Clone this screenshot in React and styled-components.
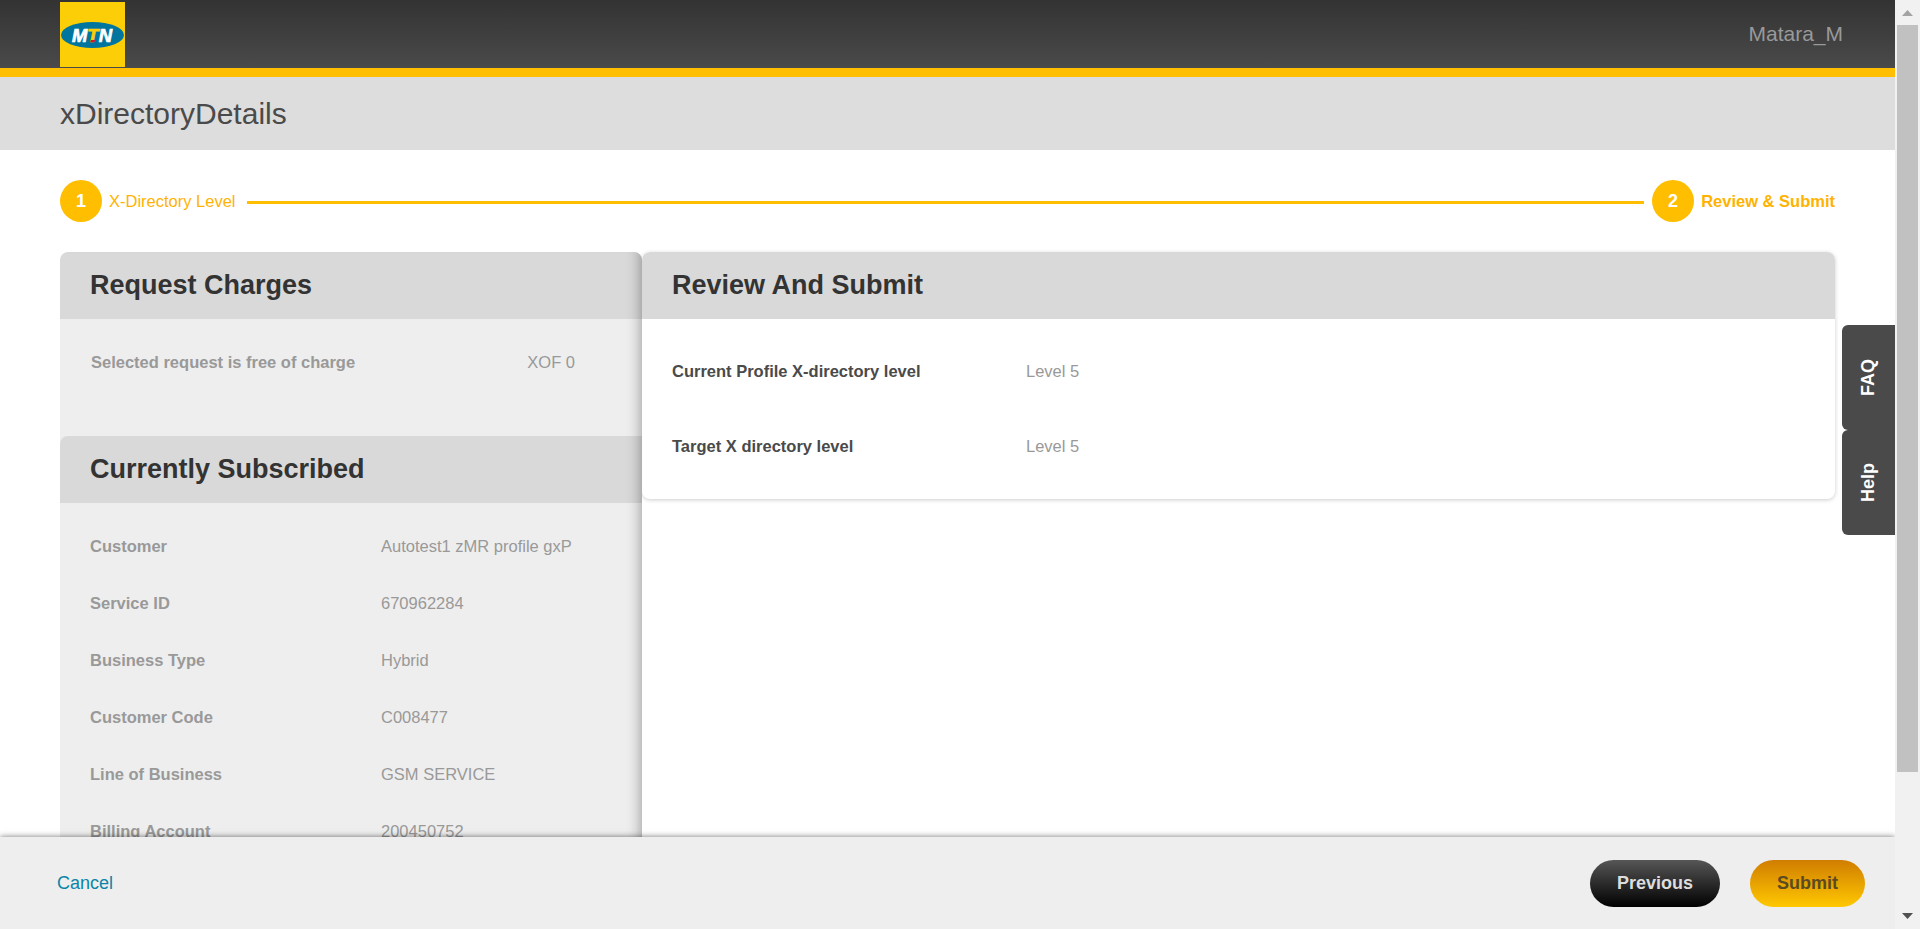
import React from 'react';
import styled, { createGlobalStyle } from 'styled-components';

const GlobalStyle = createGlobalStyle`
  * { box-sizing: border-box; }
  html, body { margin: 0; padding: 0; height: 929px; overflow: hidden; background: #fff; }
  body { font-family: "Liberation Sans", Arial, sans-serif; font-size: 16.5px; color: #999; }
  h1, h2, dl, dt, dd { margin: 0; }
`;

const Window = styled.div`
  display: flex;
  width: 1920px;
  height: 929px;
`;

const Page = styled.div`
  position: relative;
  display: flex;
  flex-direction: column;
  width: 1895px;
  height: 929px;
  background: #fff;
`;

const TopBar = styled.header`
  display: flex;
  align-items: center;
  justify-content: space-between;
  flex: none;
  height: 77px;
  padding: 0 52px 0 60px;
  border-bottom: 9px solid #ffbe00;
  background: linear-gradient(#333, #4a4a4a) padding-box;
`;

const Logo = styled.svg`
  display: block;
  width: 65px;
  height: 65px;
  margin-top: 1px;
`;

const UserName = styled.span`
  font-size: 21px;
  line-height: 24px;
  color: #999;
`;

const TitleBar = styled.div`
  display: flex;
  align-items: center;
  flex: none;
  height: 73px;
  padding-left: 60px;
  background: #ddd;
`;

const Title = styled.h1`
  font-size: 30px;
  font-weight: 400;
  line-height: 34px;
  color: #4a4a4a;
`;

const Steps = styled.div`
  display: flex;
  align-items: center;
  flex: none;
  height: 42px;
  margin: 30px 60px;
`;

const StepNumber = styled.span`
  display: flex;
  align-items: center;
  justify-content: center;
  width: 42px;
  height: 42px;
  border-radius: 50%;
  background: #ffbe00;
  color: #fff;
  font-size: 18px;
  font-weight: 700;
`;

const StepLabel = styled.span`
  margin-left: 7px;
  color: #ffb300;
  font-weight: ${(p) => (p.$current ? 700 : 400)};
  white-space: nowrap;
`;

const StepLine = styled.span`
  flex: 1;
  height: 3px;
  margin: 3px 8px 0 11px;
  background: #ffbe00;
`;

const Columns = styled.main`
  display: flex;
  align-items: flex-start;
  flex: 1;
  min-height: 0;
  margin: 0 60px;
`;

const Sidebar = styled.aside`
  position: relative;
  width: 582px;
  height: 100%;
  overflow: hidden;
  border-radius: 8px 8px 0 0;
  background: #eee;

  &::after {
    content: '';
    position: absolute;
    inset: 0;
    box-shadow: inset -15px 0 15px -15px rgba(0, 0, 0, 0.4);
  }
`;

const PanelHead = styled.h2`
  display: flex;
  align-items: center;
  height: 67px;
  padding-left: 30px;
  border-radius: 8px 0 0 0;
  background: #d9d9d9;
  color: #333;
  font-size: 27px;
  font-weight: 700;
`;

const ChargeRow = styled.div`
  display: flex;
  justify-content: space-between;
  height: 117px;
  padding: 34px 67px 0 31px;
  line-height: 19px;
`;

const Strong = styled.strong`
  font-weight: 700;
`;

const Details = styled.dl`
  display: grid;
  grid-template-columns: 291px 1fr;
  grid-auto-rows: 57px;
  padding: 15px 0 0 30px;
  line-height: 57px;
`;

const Term = styled.dt`
  font-weight: 700;
`;

const Value = styled.dd`
  white-space: nowrap;
`;

const ReviewCard = styled.section`
  flex: 1;
  overflow: hidden;
  height: 247px;
  border-radius: 8px;
  background: #fff;
  box-shadow: 0 1px 4px rgba(0, 0, 0, 0.2);
`;

const ReviewList = styled.dl`
  display: grid;
  grid-template-columns: 354px 1fr;
  grid-auto-rows: 75px;
  padding: 15px 0 0 30px;
  line-height: 75px;
`;

const ReviewTerm = styled(Term)`
  color: #4a4a4a;
`;

const Footer = styled.footer`
  position: relative;
  display: flex;
  align-items: center;
  flex: none;
  gap: 30px;
  height: 92px;
  padding: 1px 30px 0 57px;
  background: #eee;
  box-shadow: 0 0 6px rgba(0, 0, 0, 0.55);
  clip-path: inset(-10px 0 0 0);
`;

const Cancel = styled.a`
  margin-right: auto;
  color: #0a85a8;
  font-size: 18px;
`;

const Button = styled.button`
  width: ${(p) => p.$width}px;
  height: 47px;
  padding: 0;
  border: 0;
  border-radius: 23.5px;
  background: ${(p) => (p.$primary ? 'linear-gradient(#d07d00, #ffc800)' : 'linear-gradient(#565656, #000)')};
  color: ${(p) => (p.$primary ? '#5c4a22' : '#ddd')};
  font: 700 18px "Liberation Sans", Arial, sans-serif;
`;

const SideTabs = styled.nav`
  position: absolute;
  top: 325px;
  right: 0;
  display: flex;
  flex-direction: column;
`;

const SideTab = styled.div`
  display: flex;
  align-items: center;
  justify-content: center;
  width: 53px;
  height: 105px;
  border-radius: 6px 0 0 6px;
  background: #4a4a4a;
  color: #fff;
`;

const SideTabText = styled.span`
  transform: rotate(-90deg);
  font-size: 18px;
  font-weight: 700;
`;

const Scrollbar = styled.div`
  display: flex;
  flex-direction: column;
  align-items: center;
  width: 25px;
  height: 929px;
  background: #f1f1f1;
`;

const ArrowBox = styled.svg`
  display: block;
  flex: none;
  width: 25px;
  height: 25px;
`;

const Track = styled.div`
  flex: 1;
  width: 21px;
`;

const Thumb = styled.div`
  height: 747px;
  background: #c1c1c1;
`;

const subscription = [
  ['Customer', 'Autotest1 zMR profile gxP'],
  ['Service ID', '670962284'],
  ['Business Type', 'Hybrid'],
  ['Customer Code', 'C008477'],
  ['Line of Business', 'GSM SERVICE'],
  ['Billing Account', '200450752'],
];

const review = [
  ['Current Profile X-directory level', 'Level 5'],
  ['Target X directory level', 'Level 5'],
];

function MtnLogo() {
  return (
    <Logo viewBox="0 0 65 65">
      <rect width="65" height="65" fill="#fbce07" />
      <ellipse cx="32.5" cy="33" rx="31.5" ry="13" fill="#00759e" />
      <text
        x="32"
        y="39.5"
        textAnchor="middle"
        textLength="40"
        lengthAdjust="spacingAndGlyphs"
        fontFamily="Liberation Sans"
        fontSize="18"
        fontWeight="700"
        fontStyle="italic"
        fill="#fff"
        stroke="#fff"
        strokeWidth="0.7"
      >
        M<tspan fill="#fbce07" stroke="#fbce07">T</tspan>N
      </text>
      <path d="M31 38h4l-.7 2.2h-4z" fill="#e2122d" />
    </Logo>
  );
}

export default function App() {
  return (
    <Window>
      <GlobalStyle />
      <Page>
        <TopBar>
          <MtnLogo />
          <UserName>Matara_M</UserName>
        </TopBar>
        <TitleBar>
          <Title>xDirectoryDetails</Title>
        </TitleBar>
        <Steps>
          <StepNumber>1</StepNumber>
          <StepLabel>X-Directory Level</StepLabel>
          <StepLine />
          <StepNumber>2</StepNumber>
          <StepLabel $current>Review &amp; Submit</StepLabel>
        </Steps>
        <Columns>
          <Sidebar>
            <PanelHead>Request Charges</PanelHead>
            <ChargeRow>
              <Strong>Selected request is free of charge</Strong>
              <span>XOF 0</span>
            </ChargeRow>
            <PanelHead>Currently Subscribed</PanelHead>
            <Details>
              {subscription.map(([term, value]) => (
                <React.Fragment key={term}>
                  <Term>{term}</Term>
                  <Value>{value}</Value>
                </React.Fragment>
              ))}
            </Details>
          </Sidebar>
          <ReviewCard>
            <PanelHead>Review And Submit</PanelHead>
            <ReviewList>
              {review.map(([term, value]) => (
                <React.Fragment key={term}>
                  <ReviewTerm>{term}</ReviewTerm>
                  <Value>{value}</Value>
                </React.Fragment>
              ))}
            </ReviewList>
          </ReviewCard>
        </Columns>
        <Footer>
          <Cancel>Cancel</Cancel>
          <Button $width={130}>Previous</Button>
          <Button $width={115} $primary>Submit</Button>
        </Footer>
        <SideTabs>
          <SideTab><SideTabText>FAQ</SideTabText></SideTab>
          <SideTab><SideTabText>Help</SideTabText></SideTab>
        </SideTabs>
      </Page>
      <Scrollbar>
        <ArrowBox viewBox="0 0 25 25"><path d="M7 16l5.5-6 5.5 6z" fill="#a3a3a3" /></ArrowBox>
        <Track><Thumb /></Track>
        <ArrowBox viewBox="0 0 25 25"><path d="M7 9l5.5 6L18 9z" fill="#505050" /></ArrowBox>
      </Scrollbar>
    </Window>
  );
}
